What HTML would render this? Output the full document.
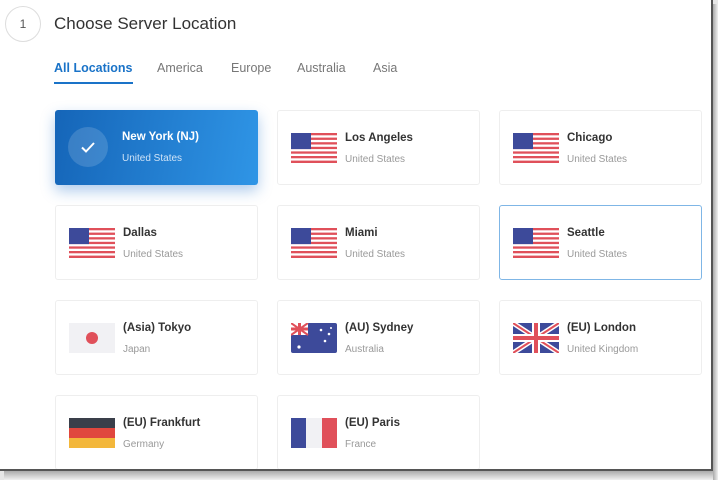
<!DOCTYPE html>
<html><head><meta charset="utf-8"><style>
*{margin:0;padding:0;box-sizing:border-box}
body{width:718px;height:480px;background:#e6e6e6;font-family:"Liberation Sans",sans-serif;position:relative;overflow:hidden}
.page{position:absolute;left:0;top:0;width:713px;height:471px;background:#fff;border-right:2px solid #555;border-bottom:2px solid #555;overflow:hidden}
.shadow{position:absolute;left:4px;top:471px;width:714px;height:9px;background:linear-gradient(#aaa,#f0f0f0)}
.shadowr{position:absolute;left:713px;top:4px;width:5px;height:476px;background:linear-gradient(90deg,#aaa,#f0f0f0)}
.num{position:absolute;left:5px;top:6px;width:36px;height:36px;border:1px solid #ddd;border-radius:50%;text-align:center;line-height:34px;font-size:12px;color:#555}
h1{position:absolute;left:54px;top:14px;font-size:17px;font-weight:normal;color:#333}
.tab{position:absolute;top:61px;font-size:12.5px;color:#777}
.tab.on{color:#1a73c8;font-weight:bold}
.ul{position:absolute;left:54px;top:82px;width:79px;height:2px;background:#1a73c8}
.card{position:absolute;width:203px;height:75px;border:1px solid #eee;border-radius:3px;background:#fff}
.card svg{position:absolute;left:13px;top:22px}
.card .n{position:absolute;left:67px;top:21px;font-size:11.5px;font-weight:bold;color:#333}
.card .c{position:absolute;left:67px;top:43px;font-size:10px;color:#999}
.sel{background:linear-gradient(100deg,#1565b8,#2f95e6);border:none;box-shadow:0 6px 14px rgba(30,110,200,.35)}
.sel .n{color:#fff}.sel .c{color:#cfe3f7}
.chk{position:absolute;left:13px;top:17px;width:40px;height:40px;border-radius:50%;background:rgba(255,255,255,.15)}
.card.hl{border:1px solid #7fb6e6}
</style></head><body>
<div class="page">
<div class="num">1</div>
<h1>Choose Server Location</h1>
<div class="tab on" style="left:54px">All Locations</div>
<div class="tab" style="left:157px">America</div>
<div class="tab" style="left:231px">Europe</div>
<div class="tab" style="left:297px">Australia</div>
<div class="tab" style="left:373px">Asia</div>
<div class="ul"></div>
<svg width="0" height="0" style="position:absolute"><defs>
<g id="us"><rect width="46" height="30" rx="2" fill="#fff"/><g fill="#e0505a"><rect y="0" width="46" height="2.3"/><rect y="4.6" width="46" height="2.3"/><rect y="9.2" width="46" height="2.3"/><rect y="13.8" width="46" height="2.3"/><rect y="18.4" width="46" height="2.3"/><rect y="23" width="46" height="2.3"/><rect y="27.6" width="46" height="2.4"/></g><rect width="20" height="16.1" fill="#3d4a9a"/></g>
</defs></svg>

<div class="card sel" style="left:55px;top:110px"><div class="chk"><svg width="40" height="40" style="left:0;top:0"><path d="M14 20.5l4 4 8-8.5" stroke="#fff" stroke-width="2" fill="none"/></svg></div><div class="n">New York (NJ)</div><div class="c">United States</div></div>
<div class="card" style="left:277px;top:110px"><svg width="46" height="30"><use href="#us"/></svg><div class="n">Los Angeles</div><div class="c">United States</div></div>
<div class="card" style="left:499px;top:110px"><svg width="46" height="30"><use href="#us"/></svg><div class="n">Chicago</div><div class="c">United States</div></div>
<div class="card" style="left:55px;top:205px"><svg width="46" height="30"><use href="#us"/></svg><div class="n">Dallas</div><div class="c">United States</div></div>
<div class="card" style="left:277px;top:205px"><svg width="46" height="30"><use href="#us"/></svg><div class="n">Miami</div><div class="c">United States</div></div>
<div class="card hl" style="left:499px;top:205px"><svg width="46" height="30"><use href="#us"/></svg><div class="n">Seattle</div><div class="c">United States</div></div>
<div class="card" style="left:55px;top:300px"><svg width="46" height="30"><rect width="46" height="30" fill="#f1f1f4"/><circle cx="23" cy="15" r="6" fill="#e0505a"/></svg><div class="n">(Asia) Tokyo</div><div class="c">Japan</div></div>
<div class="card" style="left:277px;top:300px"><svg width="46" height="30"><rect width="46" height="30" rx="2" fill="#3d4a9a"/><rect width="17" height="12" fill="#fff"/><path d="M0 0L17 12M17 0L0 12" stroke="#e0505a" stroke-width="2"/><path d="M8.5 0V12M0 6H17" stroke="#e0505a" stroke-width="3"/><g fill="#fff"><circle cx="30" cy="7" r="1.3"/><circle cx="38" cy="11" r="1.3"/><circle cx="34" cy="18" r="1.3"/><circle cx="40" cy="5" r="1"/><circle cx="8" cy="24" r="1.6"/></g></svg><div class="n">(AU) Sydney</div><div class="c">Australia</div></div>
<div class="card" style="left:499px;top:300px"><svg width="46" height="30"><rect width="46" height="30" rx="2" fill="#3d4a9a"/><path d="M0 0L46 30M46 0L0 30" stroke="#fff" stroke-width="5"/><path d="M0 0L46 30M46 0L0 30" stroke="#e0505a" stroke-width="2"/><path d="M23 0V30M0 15H46" stroke="#fff" stroke-width="8"/><path d="M23 0V30M0 15H46" stroke="#e0505a" stroke-width="4"/></svg><div class="n">(EU) London</div><div class="c">United Kingdom</div></div>
<div class="card" style="left:55px;top:395px"><svg width="46" height="30"><rect width="46" height="10" fill="#3a3f4a"/><rect y="10" width="46" height="10" fill="#e0473e"/><rect y="20" width="46" height="10" fill="#f3b73b"/></svg><div class="n">(EU) Frankfurt</div><div class="c">Germany</div></div>
<div class="card" style="left:277px;top:395px"><svg width="46" height="30"><rect width="15" height="30" fill="#3d4a9a"/><rect x="15" width="16" height="30" fill="#f1f1f4"/><rect x="31" width="15" height="30" fill="#e0505a"/></svg><div class="n">(EU) Paris</div><div class="c">France</div></div>
</div>
<div class="shadow"></div><div class="shadowr"></div>
</body></html>
